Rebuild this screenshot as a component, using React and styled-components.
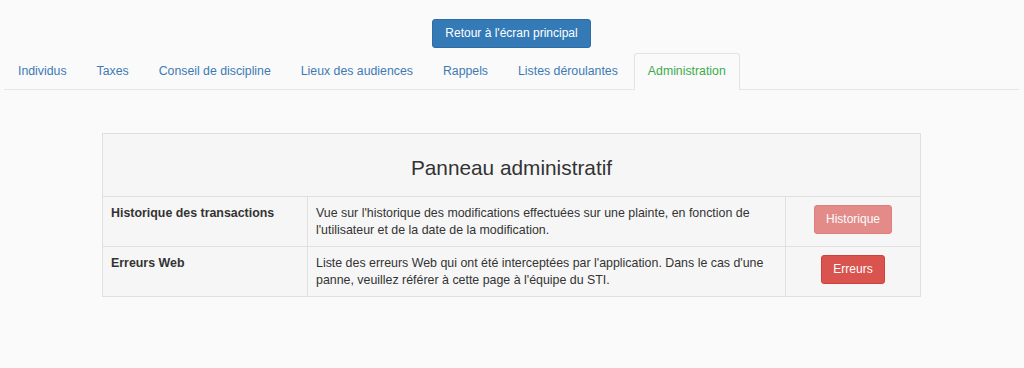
import styled, { createGlobalStyle } from "styled-components";

const GlobalStyle = createGlobalStyle`
  html, body {
    margin: 0;
    padding: 0;
    background: #fafafa;
    font-family: "Liberation Sans", Arial, sans-serif;
    color: #333333;
  }
`;

const Page = styled.div`
  width: 1024px;
  height: 368px;
  padding: 19px 5px 0 4px;
  box-sizing: border-box;
`;

const TopBar = styled.div`
  display: flex;
  justify-content: center;
  margin-bottom: 5px;
`;

const Button = styled.button`
  display: inline-block;
  vertical-align: top;
  font-family: inherit;
  font-size: 12px;
  line-height: 17px;
  padding: 5px ${(p) => p.$padX || 12}px;
  border-radius: 3px;
  border: 1px solid ${(p) => p.$border};
  background: ${(p) => p.$bg};
  color: #ffffff;
  cursor: pointer;
  opacity: ${(p) => (p.disabled ? 0.65 : 1)};
`;

const Tabs = styled.ul`
  display: flex;
  list-style: none;
  margin: 0;
  padding: 0;
  border-bottom: 1px solid #e6e6e6;
`;

const Tab = styled.li`
  margin-right: 2px;
  margin-bottom: -1px;
  padding: 8px 13px 9px 13px;
  font-size: 12.3px;
  line-height: 18px;
  border: 1px solid ${(p) => (p.$active ? "#e3e3e3" : "transparent")};
  border-bottom-color: ${(p) => (p.$active ? "#fafafa" : "transparent")};
  border-radius: 3px 3px 0 0;
  background: ${(p) => (p.$active ? "#fafafa" : "transparent")};
  color: ${(p) => (p.$active ? "#3cab4c" : "#3d7ab5")};
  cursor: pointer;
`;

const Table = styled.table`
  width: 819px;
  margin: 43px auto 0;
  border-collapse: collapse;
  background: #f6f6f6;
  font-size: 12.4px;
  line-height: 17px;
`;

const Title = styled.th`
  height: 63px;
  padding: 5px 0 0;
  box-sizing: border-box;
  font-size: 20.8px;
  font-weight: normal;
  color: #333333;
  text-align: center;
  border: 1px solid #e0e0e0;
`;

const Cell = styled.td`
  padding: 8px 8px 7px;
  vertical-align: top;
  border: 1px solid #e0e0e0;
  font-weight: ${(p) => (p.$bold ? "bold" : "normal")};
  text-align: ${(p) => p.$align || "left"};
  width: ${(p) => p.$w || "auto"};
  box-sizing: border-box;
`;

const tabs = [
  "Individus",
  "Taxes",
  "Conseil de discipline",
  "Lieux des audiences",
  "Rappels",
  "Listes déroulantes",
  "Administration",
];

const rows = [
  {
    name: "Historique des transactions",
    text: "Vue sur l'historique des modifications effectuées sur une plainte, en fonction de l'utilisateur et de la date de la modification.",
    button: "Historique",
    disabled: true,
  },
  {
    name: "Erreurs Web",
    text: "Liste des erreurs Web qui ont été interceptées par l'application. Dans le cas d'une panne, veuillez référer à cette page à l'équipe du STI.",
    button: "Erreurs",
    disabled: false,
  },
];

export default function App() {
  return (
    <Page>
      <GlobalStyle />
      <TopBar>
        <Button $bg="#337ab7" $border="#2e6da4">
          Retour à l'écran principal
        </Button>
      </TopBar>
      <Tabs>
        {tabs.map((t) => (
          <Tab key={t} $active={t === "Administration"}>
            {t}
          </Tab>
        ))}
      </Tabs>
      <Table>
        <thead>
          <tr>
            <Title colSpan={3}>Panneau administratif</Title>
          </tr>
        </thead>
        <tbody>
          {rows.map((r) => (
            <tr key={r.name}>
              <Cell $bold $w="205px">{r.name}</Cell>
              <Cell $w="478px">{r.text}</Cell>
              <Cell $align="center">
                <Button
                  $bg="#d9534f"
                  $border="#d43f3a"
                  $padX={11}
                  disabled={r.disabled}
                >
                  {r.button}
                </Button>
              </Cell>
            </tr>
          ))}
        </tbody>
      </Table>
    </Page>
  );
}
